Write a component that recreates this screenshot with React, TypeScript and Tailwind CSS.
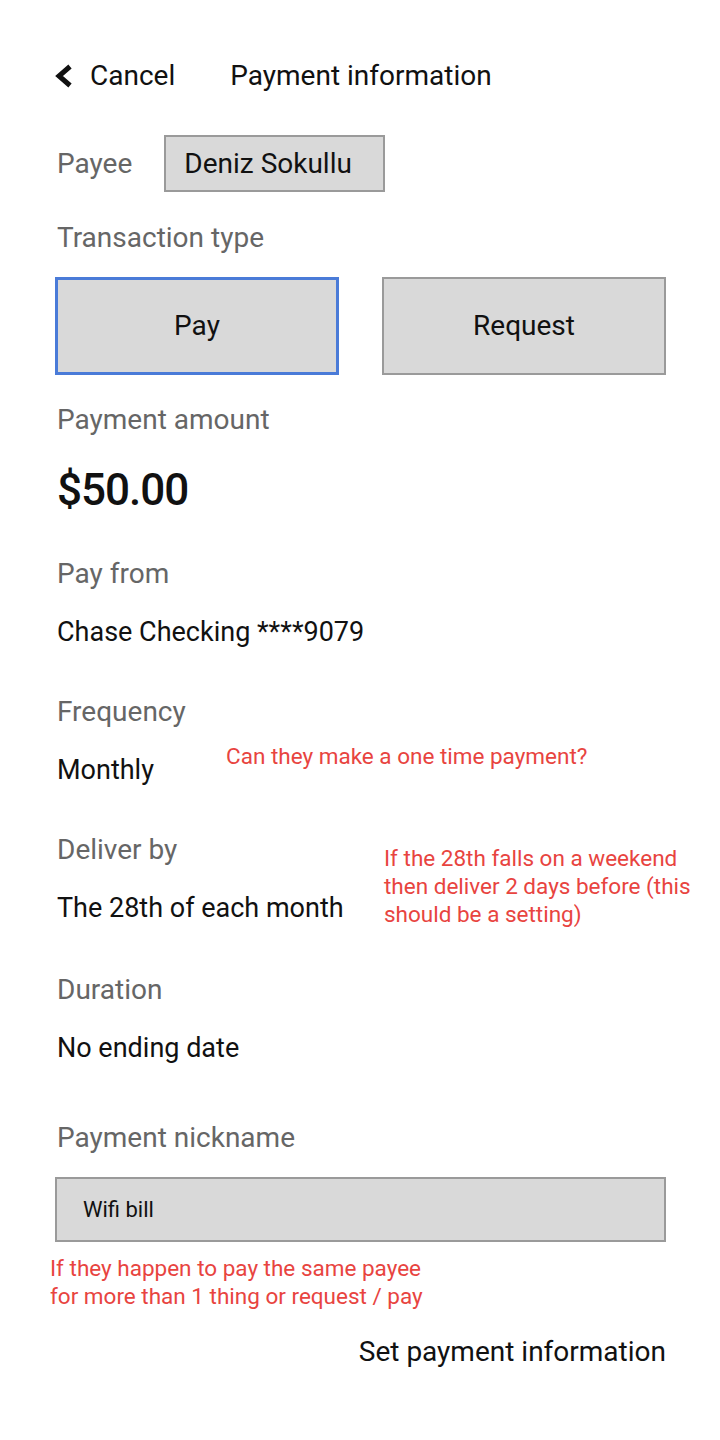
import React from 'react'

const font = { fontFamily: 'Roboto, "Liberation Sans", sans-serif' }

function Label({ children, className = '' }: { children: React.ReactNode; className?: string }) {
  return <div className={`text-[28px] leading-[32px] text-[#666666] ${className}`}>{children}</div>
}

function Value({ children, className = '' }: { children: React.ReactNode; className?: string }) {
  return <div className={`text-[27px] leading-[32px] text-[#111111] whitespace-nowrap ${className}`}>{children}</div>
}

function Note({ children, className = '' }: { children: React.ReactNode; className?: string }) {
  return <div className={`text-[22.5px] leading-[28px] text-[#e8443f] whitespace-nowrap ${className}`}>{children}</div>
}

export default function App() {
  return (
    <div className="w-[720px] min-h-[1440px] bg-white" style={font}>
      <div className="flex flex-col pl-[57px] pr-[54px] pt-[60px]">
        {/* header */}
        <div className="flex items-center h-[32px]">
          <svg width="20" height="26" viewBox="0 0 20 26" className="-ml-[3px]">
            <polyline points="16,3.5 5,13 16,22.5" fill="none" stroke="#111" strokeWidth="5" strokeLinejoin="miter" />
          </svg>
          <span className="ml-[16px] text-[28px] leading-[32px] text-[#111]">Cancel</span>
          <span className="ml-[55px] text-[28px] leading-[32px] text-[#111]">Payment information</span>
        </div>

        {/* payee */}
        <div className="flex items-center mt-[43px]">
          <Label>Payee</Label>
          <div className="ml-[32px] h-[57px] w-[221px] flex items-center pl-[18px] bg-[#d9d9d9] border-2 border-[#9a9a9a]">
            <span className="text-[28px] leading-[32px] text-[#111]">Deniz Sokullu</span>
          </div>
        </div>

        <Label className="mt-[30px]">Transaction type</Label>
        <div className="flex justify-between mt-[23px] -ml-[2px]">
          <button className="h-[98px] w-[284px] bg-[#d9d9d9] border-[3px] border-[#4a7bd8] text-[28px] text-[#111]">Pay</button>
          <button className="h-[98px] w-[284px] bg-[#d9d9d9] border-2 border-[#9a9a9a] text-[28px] text-[#111]">Request</button>
        </div>

        <Label className="mt-[29px]">Payment amount</Label>
        <div className="mt-[26px] text-[44px] leading-[56px] font-medium tracking-[-1px] text-[#111]">$50.00</div>

        <Label className="mt-[40px]">Pay from</Label>
        <Value className="mt-[26px]">Chase Checking ****9079</Value>

        <Label className="mt-[48px]">Frequency</Label>
        <div className="flex items-start mt-[26px]">
          <Value className="w-[169px] shrink-0">Monthly</Value>
          <Note className="-mt-[28px] pt-[16px]">Can they make a one time payment?</Note>
        </div>

        <div className="flex items-start mt-[48px]">
          <div className="w-[327px] shrink-0">
            <Label>Deliver by</Label>
            <Value className="mt-[26px]">The 28th of each month</Value>
          </div>
          <Note className="pt-[10px] -mb-[4px]">
            If the 28th falls on a weekend
            <br />
            then deliver 2 days before (this
            <br />
            should be a setting)
          </Note>
        </div>

        <Label className="mt-[50px]">Duration</Label>
        <Value className="mt-[26px]">No ending date</Value>

        <Label className="mt-[58px]">Payment nickname</Label>
        <div className="mt-[23px] -ml-[2px] h-[65px] flex items-center pl-[26px] bg-[#d9d9d9] border-2 border-[#9a9a9a]">
          <span className="text-[22px] text-[#111]">Wifi bill</span>
        </div>
        <Note className="mt-[12px] -ml-[7px]">
          If they happen to pay the same payee
          <br />
          for more than 1 thing or request / pay
        </Note>

        <div className="mt-[26px] self-end text-[28px] leading-[32px] text-[#111]">Set payment information</div>
      </div>
    </div>
  )
}
